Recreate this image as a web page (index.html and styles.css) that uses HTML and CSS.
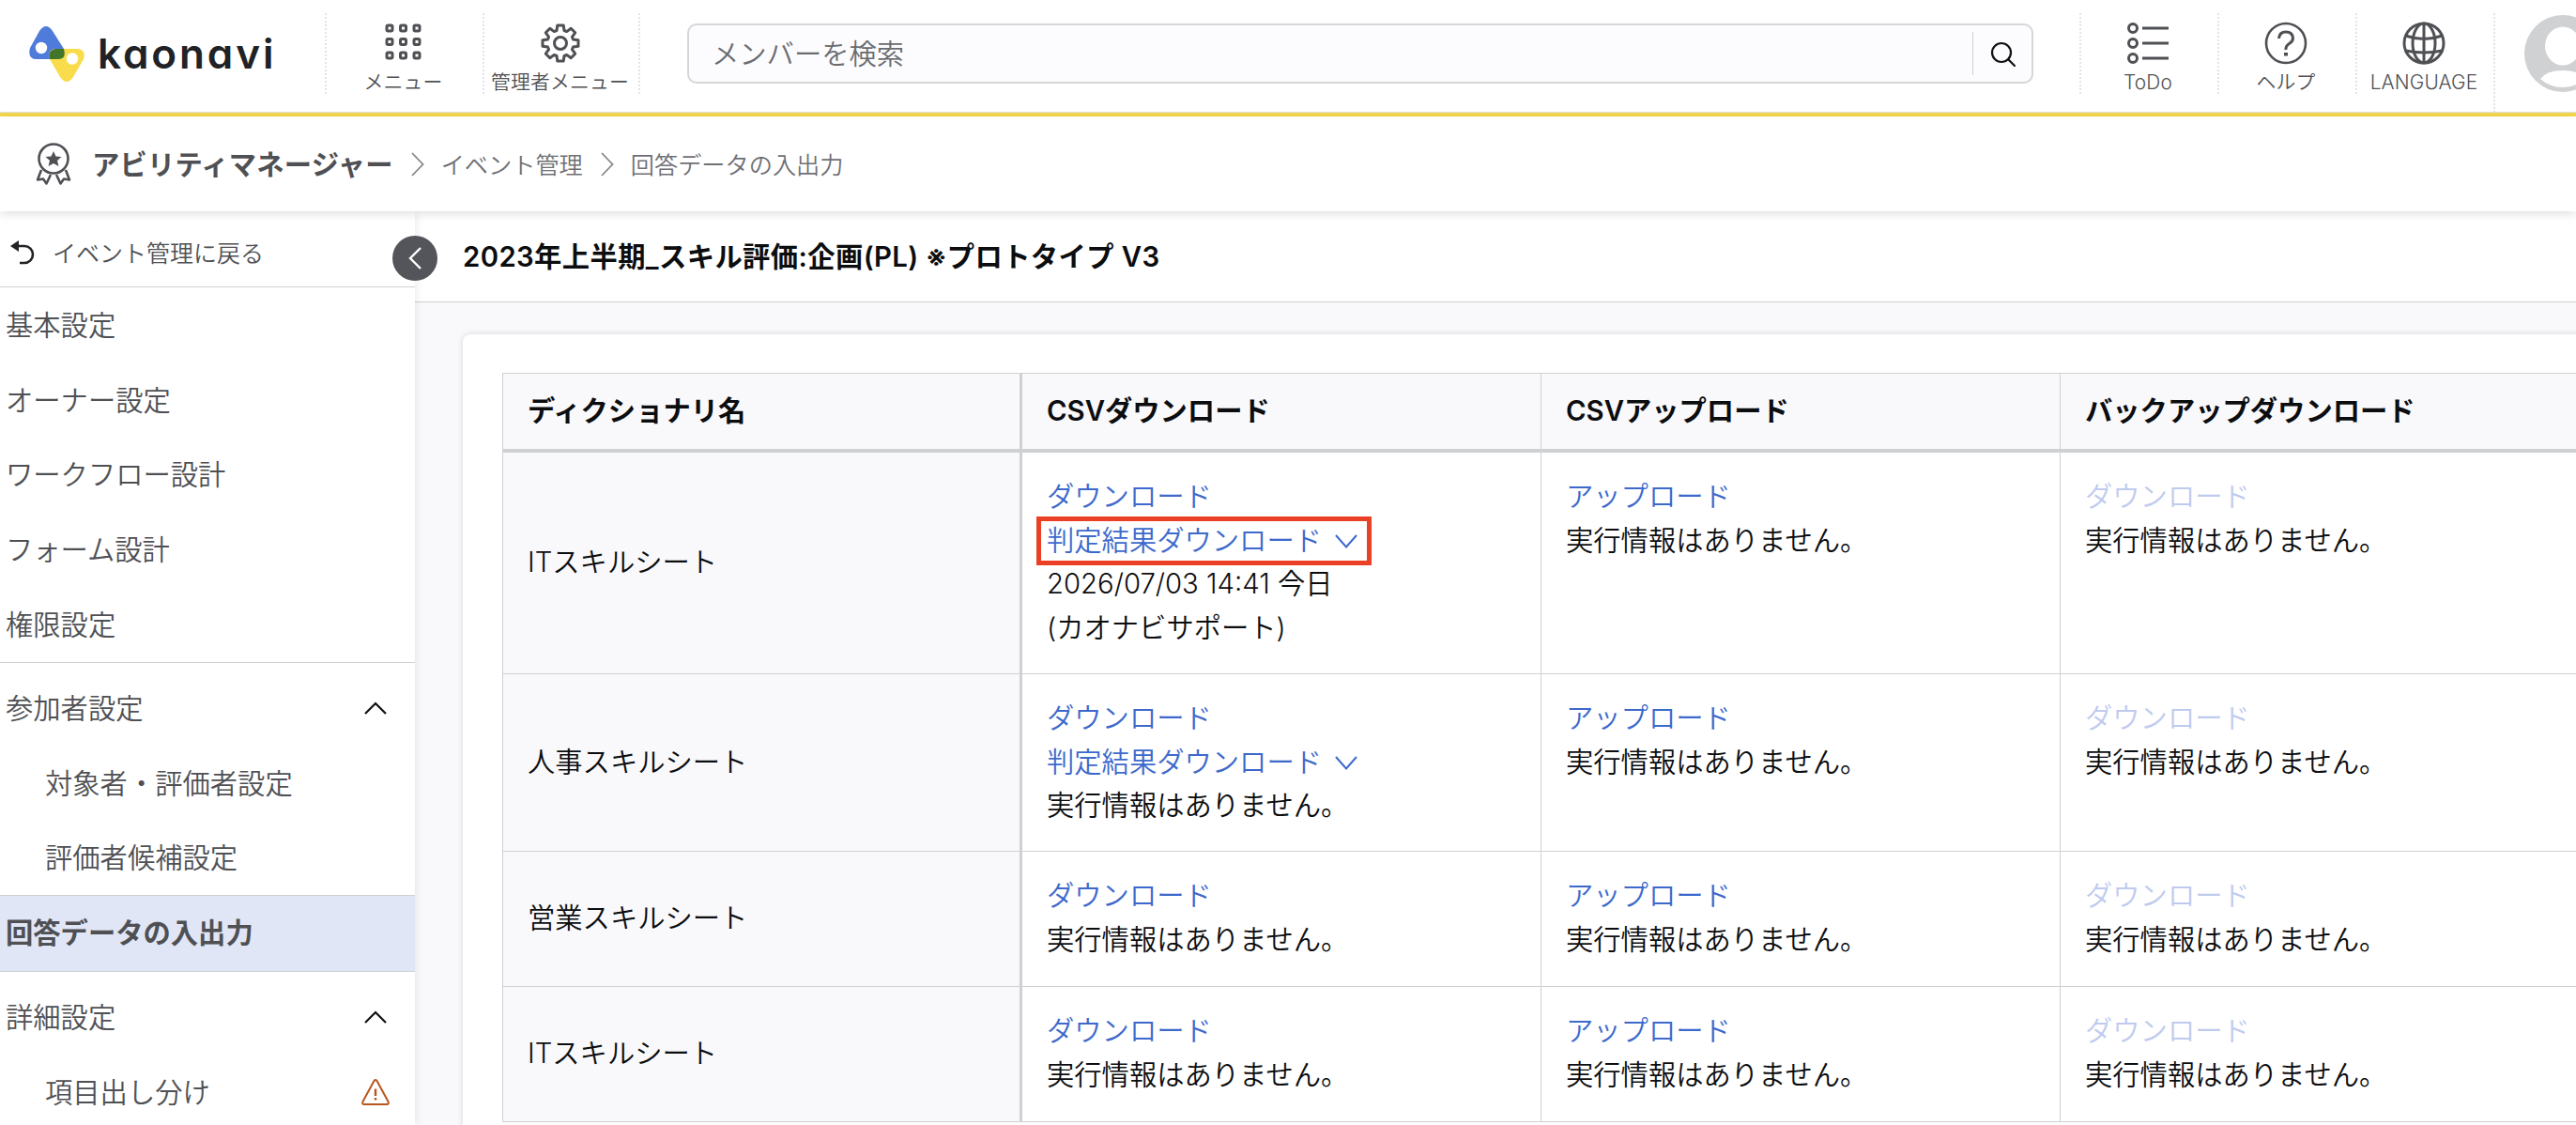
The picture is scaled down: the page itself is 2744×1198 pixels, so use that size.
FILE: index.html
```html
<!DOCTYPE html>
<html lang="ja">
<head>
    <meta charset="UTF-8">
    <meta name="viewport" content="width=device-width, initial-scale=1.0">
    <title>回答データの入出力 | kaonavi</title>
    <link rel="stylesheet" href="styles.css">
</head>
<body>
    <header class="header">
        <a class="logo">
            <svg width="60" height="62" viewBox="0 0 60 62">
                <path d="M11 6 Q18 -4 25 6 L37 25 Q41 36 31 36 H8 Q-2 36 1 24 Z" fill="#4f7cdb"/>
                <path d="M28 25 H52 Q61 26 58 36 L47 55 Q40 65 33 55 L22 36 Q19 26 28 25 Z" fill="#f9dc4c"/>
                <path d="M28 25 H37 Q40 36 31 36 H22 Q19 27 28 25 Z" fill="#42742a"/>
                <circle cx="13" cy="24" r="6.200" fill="#fff"/>
                <circle cx="46" cy="35.500" r="6.200" fill="#fff"/>
            </svg>
            <span class="logoText">kaonavi</span>
        </a>
        <div class="headerItem menu">
            <svg width="40" height="40" viewBox="0 0 40 40" fill="none" stroke="#4f5054" stroke-width="3">
                <rect x="2" y="2" width="6" height="6" rx="1.5"/><rect x="16.500" y="2" width="6" height="6" rx="1.5"/><rect x="31" y="2" width="6" height="6" rx="1.5"/>
                <rect x="2" y="16.500" width="6" height="6" rx="1.5"/><rect x="16.500" y="16.500" width="6" height="6" rx="1.5"/><rect x="31" y="16.500" width="6" height="6" rx="1.5"/>
                <rect x="2" y="31" width="6" height="6" rx="1.5"/><rect x="16.500" y="31" width="6" height="6" rx="1.5"/><rect x="31" y="31" width="6" height="6" rx="1.5"/>
            </svg>
            <span>メニュー</span>
        </div>
        <div class="headerItem admin">
            <svg width="42" height="42" viewBox="0 0 42 42" fill="none" stroke="#4f5054" stroke-width="3" stroke-linejoin="round">
                <path d="M17 7.500L17.800 2H24.200L25 7.500L27.700 8.600L32.200 5.300L36.700 9.800L33.400 14.300L34.500 17L40 17.800V24.200L34.500 25L33.400 27.700L36.700 32.200L32.200 36.700L27.700 33.400L25 34.500L24.200 40H17.800L17 34.500L14.300 33.400L9.800 36.700L5.300 32.200L8.600 27.700L7.500 25L2 24.200V17.800L7.500 17L8.600 14.300L5.300 9.800L9.800 5.300L14.300 8.600Z"/>
                <circle cx="21" cy="21" r="6.500"/>
            </svg>
            <span>管理者メニュー</span>
        </div>
        <div class="search">
            <div class="searchText">メンバーを検索</div>
            <div class="searchButton">
                <svg width="28" height="28" viewBox="0 0 28 28" fill="none" stroke="#111" stroke-width="2.200" stroke-linecap="round">
                    <circle cx="12" cy="12" r="10"/><path d="M19.500 19.500L26 26"/>
                </svg>
            </div>
        </div>
        <div class="headerItem">
            <svg width="46" height="46" viewBox="0 0 46 46" fill="none" stroke="#4f5054" stroke-width="3">
                <circle cx="7" cy="7" r="4.500"/><circle cx="7" cy="23" r="4.500"/><circle cx="7" cy="39" r="4.500"/>
                <path d="M17 7H45M17 23H45M17 39H45"/>
            </svg>
            <span>ToDo</span>
        </div>
        <div class="headerItem">
            <svg width="46" height="46" viewBox="0 0 46 46" fill="none" stroke="#4f5054" stroke-width="2.600">
                <circle cx="23" cy="23" r="21"/>
                <path d="M15.500 18Q16 11 23 11T30.500 17.500Q30.500 21 26.500 23.500T23 30" stroke-width="3"/>
                <path d="M23 33V36.500" stroke-width="4"/>
            </svg>
            <span>ヘルプ</span>
        </div>
        <div class="headerItem">
            <svg width="46" height="46" viewBox="0 0 46 46" fill="none" stroke="#4f5054" stroke-width="3">
                <circle cx="23" cy="23" r="21"/>
                <ellipse cx="23" cy="23" rx="12" ry="21"/>
                <path d="M23 2V44M3.500 15Q23 22 42.500 15M3.500 31Q23 35 42.500 31"/>
            </svg>
            <span>LANGUAGE</span>
        </div>
        <div class="avatar">
            <svg width="82" height="82" viewBox="0 0 82 82">
                <circle cx="41" cy="41" r="41" fill="#d0d1d3"/>
                <ellipse cx="41" cy="33" rx="19" ry="20.500" fill="#fff"/>
                <path d="M17 68Q24 59 41 59T65 68Q55 77 41 77T17 68Z" fill="#fff"/>
            </svg>
        </div>
    </header>

    <nav class="breadcrumb">
        <svg width="38" height="46" viewBox="0 0 38 46" fill="none" stroke="#4f5054" stroke-width="2.600" stroke-linejoin="round">
            <circle cx="19" cy="17" r="15.500"/>
            <path d="M19 9L21.500 14.500L27.500 15L23 19L24.500 25L19 22L13.500 25L15 19L10.500 15L16.500 14.500Z" fill="#4f5054" stroke="none"/>
            <path d="M6 29L2 39.500L8 38.500L11.500 43.500L16 34M32 29L36 39.500L30 38.500L26.500 43.500L22 34"/>
        </svg>
        <b>アビリティマネージャー</b>
        <svg class="arrow" width="14" height="26" viewBox="0 0 14 26" fill="none" stroke="#85868a" stroke-width="1.800"><path d="M1 1L12.500 13L1 25"/></svg>
        <span>イベント管理</span>
        <svg class="arrow" width="14" height="26" viewBox="0 0 14 26" fill="none" stroke="#85868a" stroke-width="1.800"><path d="M1 1L12.500 13L1 25"/></svg>
        <span>回答データの入出力</span>
    </nav>

    <div class="wrapper">
        <aside class="sidebar">
            <div class="back">
                <svg width="28" height="28" viewBox="0 0 28 28" fill="none" stroke="#222327" stroke-width="2.600">
                    <path d="M4 7H15A9 9 0 0 1 15 25H10"/><path d="M0 7L9 1V13Z" fill="#222327" stroke="none"/>
                </svg>
                <span>イベント管理に戻る</span>
            </div>
            <ul class="group">
                <li>基本設定</li>
                <li>オーナー設定</li>
                <li>ワークフロー設計</li>
                <li>フォーム設計</li>
                <li>権限設定</li>
            </ul>
            <ul class="group sub">
                <li>参加者設定 <svg class="chevron" width="26" height="16" viewBox="0 0 26 16" fill="none" stroke="#111" stroke-width="2.200"><path d="M2 14L13 3L24 14"/></svg></li>
                <li class="child">対象者・評価者設定</li>
                <li class="child">評価者候補設定</li>
            </ul>
            <div class="current">回答データの入出力</div>
            <ul class="group sub">
                <li>詳細設定 <svg class="chevron" width="26" height="16" viewBox="0 0 26 16" fill="none" stroke="#111" stroke-width="2.200"><path d="M2 14L13 3L24 14"/></svg></li>
                <li class="child">項目出し分け
                    <svg width="30" height="28" viewBox="0 0 30 28" fill="none" stroke="#b9551c" stroke-width="2" stroke-linejoin="round">
                        <path d="M13.500 2Q15 0 16.500 2L28.500 24Q29.500 27 27 27H3Q0.500 27 1.500 24Z"/><path d="M15 10.500V18M15 20V22.500" stroke-width="2.400"/>
                    </svg>
                </li>
            </ul>
            <!-- collapse button -->
            <div class="toggle">
                <svg width="16" height="26" viewBox="0 0 16 26" fill="none" stroke="#fff" stroke-width="2.400"><path d="M14 2L3 13L14 24"/></svg>
            </div>
        </aside>

        <main class="main">
            <h1 class="pageTitle">2023年上半期_スキル評価:企画(PL) ※プロトタイプ V3</h1>
            <div class="card">
                <table class="table">
                    <thead>
                        <tr>
                            <th>ディクショナリ名</th>
                            <th>CSVダウンロード</th>
                            <th>CSVアップロード</th>
                            <th>バックアップダウンロード</th>
                        </tr>
                    </thead>
                    <tbody>
                        <tr class="lines4">
                            <th>ITスキルシート</th>
                            <td>
                                <a>ダウンロード</a>
                                <a class="marked">判定結果ダウンロード<svg width="24" height="16" viewBox="0 0 24 16" fill="none" stroke="#3d69cc" stroke-width="2"><path d="M1 1L12 13.500L23 1"/></svg></a>
                                <p>2026/07/03 14:41 今日<br>(カオナビサポート)</p>
                            </td>
                            <td><a>アップロード</a><p>実行情報はありません。</p></td>
                            <td><a class="disabled">ダウンロード</a><p>実行情報はありません。</p></td>
                        </tr>
                        <tr class="lines3">
                            <th>人事スキルシート</th>
                            <td>
                                <a>ダウンロード</a>
                                <a>判定結果ダウンロード<svg width="24" height="16" viewBox="0 0 24 16" fill="none" stroke="#3d69cc" stroke-width="2"><path d="M1 1L12 13.500L23 1"/></svg></a>
                                <p>実行情報はありません。</p>
                            </td>
                            <td><a>アップロード</a><p>実行情報はありません。</p></td>
                            <td><a class="disabled">ダウンロード</a><p>実行情報はありません。</p></td>
                        </tr>
                        <tr class="lines2">
                            <th>営業スキルシート</th>
                            <td><a>ダウンロード</a><p>実行情報はありません。</p></td>
                            <td><a>アップロード</a><p>実行情報はありません。</p></td>
                            <td><a class="disabled">ダウンロード</a><p>実行情報はありません。</p></td>
                        </tr>
                        <tr class="lines2">
                            <th>ITスキルシート</th>
                            <td><a>ダウンロード</a><p>実行情報はありません。</p></td>
                            <td><a>アップロード</a><p>実行情報はありません。</p></td>
                            <td><a class="disabled">ダウンロード</a><p>実行情報はありません。</p></td>
                        </tr>
                    </tbody>
                </table>
            </div>
        </main>
    </div>
</body>
</html>
```

FILE: styles.css
```css
* {
    box-sizing: border-box;
    margin: 0;
    padding: 0;
}

body {
    height: 1198px;
    overflow: hidden;
    background: #fff;
    color: #0c0d0f;
    font-family: Inter, "Noto Sans CJK JP", sans-serif;
    font-size: 29.3px;
    font-weight: 350;
    white-space: nowrap;
}

svg {
    display: block;
    flex-shrink: 0;
}

/* header */
.header {
    display: flex;
    height: 124px;
    padding-top: 14px;
    border-bottom: 4px solid #f8da4c;
    box-shadow: inset 0 -1px 0 #e0e1e8;
    overflow: hidden;
}

.logo {
    display: flex;
    width: 346px;
    height: 86px;
    padding: 13px 0 0 31px;
    flex-shrink: 0;
}

.logoText {
    margin-left: 13px;
    font-size: 44px;
    line-height: 60px;
    font-weight: 600;
    letter-spacing: 2.9px;
    font-feature-settings: "cv11";
    color: #202226;
}

.headerItem {
    display: flex;
    flex-direction: column;
    align-items: center;
    justify-content: space-between;
    flex-shrink: 0;
    width: 147px;
    height: 86px;
    padding: 9px 3px 0 0;
    border-left: 2px dotted #e2e3e5;
    font-size: 20.8px;
    line-height: 24px;
    letter-spacing: 0.2px;
    color: #4f5054;
}

.headerItem.menu,
.headerItem.admin {
    width: 168px;
    padding-top: 11px;
}

.headerItem.admin {
    border-right: 2px dotted #e2e3e5;
}

.search {
    display: flex;
    align-items: center;
    flex-shrink: 0;
    width: 1434px;
    height: 64px;
    margin: 11px 49px 0 50px;
    border: 2px solid #d5d6d8;
    border-radius: 10px;
    background: #fcfcfe;
}

.searchText {
    flex: 1;
    padding: 0 0 4px 24px;
    color: #6b6c70;
}

.searchButton {
    height: 46px;
    width: 63px;
    padding: 10px 0 0 18px;
    border-left: 1px solid #cfd0d2;
}

.avatar {
    flex-shrink: 0;
    padding: 2px 0 0 31px;
    border-left: 2px dotted #e2e3e5;
}

/* breadcrumb */
.breadcrumb {
    display: flex;
    align-items: center;
    position: relative;
    z-index: 2;
    height: 101px;
    padding-left: 38px;
    background: #fff;
    box-shadow: 0 2px 10px rgba(0, 0, 0, 0.14);
    font-size: 25.2px;
    color: #6f7074;
}

.breadcrumb b {
    margin-left: 22px;
    padding-bottom: 3px;
    font-size: 29.3px;
    font-weight: 700;
    letter-spacing: 0.2px;
    color: #4f5054;
}

.breadcrumb span {
    padding-bottom: 2px;
}

.breadcrumb .arrow {
    margin: 0 18px 0 19px;
}

/* sidebar */
.wrapper {
    display: flex;
    height: 973px;
}

.sidebar {
    position: relative;
    z-index: 1;
    flex-shrink: 0;
    width: 442px;
    background: #fff;
    box-shadow: 0 0 10px rgba(0, 0, 0, 0.1);
    color: #4f5054;
}

.back {
    display: flex;
    align-items: center;
    height: 81px;
    padding: 8px 0 0 11px;
    border-bottom: 1px solid #cfd0d2;
    font-size: 25px;
}

.back span {
    margin-left: 17px;
    padding-bottom: 2px;
}

.group {
    list-style: none;
}

.group li {
    display: flex;
    align-items: center;
    justify-content: space-between;
    height: 79.8px;
    padding: 0 27px 4px 6px;
}

.group li svg {
    margin-top: 4px;
}

.group li .chevron {
    margin-right: 2px;
}

.group li.child {
    padding-left: 48px;
}

.group.sub {
    padding-top: 8px;
    border-top: 1px solid #cfd0d2;
}

.current {
    height: 81px;
    padding-left: 6px;
    border-top: 1px solid #cfd0d2;
    background: #e1e6f6;
    font-weight: 700;
    line-height: 79px;
}

.toggle {
    position: absolute;
    top: 26px;
    right: -24px;
    display: flex;
    align-items: center;
    justify-content: center;
    width: 48px;
    height: 48px;
    border-radius: 50%;
    background: #54555a;
}

/* main */
.main {
    flex: 1;
    min-width: 0;
    overflow: hidden;
    background: #f9f9fc;
}

.pageTitle {
    height: 97px;
    padding-left: 51px;
    border-bottom: 1px solid #cfd0d2;
    background: #fff;
    font-size: 29.3px;
    font-weight: 600;
    line-height: 97px;
    letter-spacing: 0.4px;
}

.card {
    width: 2400px;
    height: 900px;
    margin: 34px 0 0 51px;
    padding: 41px 0 0 42px;
    border-radius: 8px;
    background: #fff;
    box-shadow: 0 0 6px rgba(0, 0, 0, 0.14);
}

.table {
    width: 2213px;
    table-layout: fixed;
    border-collapse: separate;
    border-spacing: 0;
    border-top: 1px solid #cfd0d2;
    border-left: 1px solid #cfd0d2;
}

.table th,
.table td {
    padding: 24px 26px 20px;
    border-right: 1px solid #cfd0d2;
    border-bottom: 1px solid #cfd0d2;
    text-align: left;
    vertical-align: top;
    line-height: 46.6px;
}

.table th {
    padding-top: 20px;
    background: #f9f9fc;
    font-weight: 350;
    vertical-align: middle;
}

.table th:first-child {
    border-right: 3px solid #cfd0d2;
}

.table thead th {
    height: 84px;
    padding: 0 26px;
    border-bottom: 4px solid #cfd0d2;
    font-weight: 600;
}

.lines4 {
    height: 236px;
}

.lines3 {
    height: 189px;
}

.lines2 {
    height: 144px;
}

.table a {
    display: flex;
    align-items: center;
    width: max-content;
    color: #3d69cc;
}

.table a svg {
    margin: 2px 0 0 14px;
}

.table a.disabled {
    color: #bfcbee;
}

/* red frame around the link */
.table a.marked {
    margin: -2.7px -11px;
    padding: 0 10px 0 6px;
    border: 5px solid #ea4025;
    line-height: 42px;
}
```
